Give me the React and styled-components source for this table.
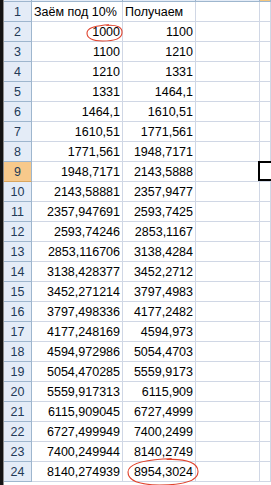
import styled, { createGlobalStyle, css } from "styled-components";

const GlobalStyle = createGlobalStyle`
  html, body {
    margin: 0;
    padding: 0;
    background: #fff;
    overflow: hidden;
  }
  body {
    font-family: "Liberation Sans", Arial, sans-serif;
  }
`;

const rows = [
  ["Заём под 10%", "Получаем"],
  ["1000", "1100"],
  ["1100", "1210"],
  ["1210", "1331"],
  ["1331", "1464,1"],
  ["1464,1", "1610,51"],
  ["1610,51", "1771,561"],
  ["1771,561", "1948,7171"],
  ["1948,7171", "2143,5888"],
  ["2143,58881", "2357,9477"],
  ["2357,947691", "2593,7425"],
  ["2593,74246", "2853,1167"],
  ["2853,116706", "3138,4284"],
  ["3138,428377", "3452,2712"],
  ["3452,271214", "3797,4983"],
  ["3797,498336", "4177,2482"],
  ["4177,248169", "4594,973"],
  ["4594,972986", "5054,4703"],
  ["5054,470285", "5559,9173"],
  ["5559,917313", "6115,909"],
  ["6115,909045", "6727,4999"],
  ["6727,499949", "7400,2499"],
  ["7400,249944", "8140,2749"],
  ["8140,274939", "8954,3024"],
];

const ACTIVE_ROW = 9;
// последняя колонка уходит за край окна
const COLS = "28px 91px 73px 64px 1fr";

const Window = styled.div`
  display: flex;
  width: 271px;
  height: 485px;
  overflow: hidden;
`;

const Frame = styled.div`
  width: 3px;
  flex: none;
  background: #141414;
  border-right: 1px solid #8c8c8c;
`;

const Sheet = styled.div`
  flex: 1;
  min-width: 0;
  display: flex;
  flex-direction: column;
  overflow: hidden;
`;

const ColHeader = styled.div`
  display: grid;
  grid-template-columns: ${COLS};
  height: 1px;
  border-bottom: 1px solid #9eb6ce;
  flex: none;
`;

const ColCell = styled.div`
  background: ${(p) => (p.$active ? "#f5c77e" : "#e4ecf7")};
  border-right: 1px solid #9eb6ce;
`;

const Row = styled.div`
  display: grid;
  grid-template-columns: ${COLS};
  height: 20px;
  flex: none;
`;

const RowNum = styled.div`
  display: flex;
  align-items: flex-end;
  justify-content: center;
  padding-bottom: 2px;
  box-sizing: border-box;
  font-size: 12.5px;
  color: #233a57;
  background: ${(p) => (p.$active ? "#f7c98b" : "#e4ecf7")};
  border-right: 1px solid #9eb6ce;
  border-bottom: 1px solid ${(p) => (p.$active ? "#d9a65f" : "#9eb6ce")};
`;

const Cell = styled.div`
  position: relative;
  display: flex;
  align-items: flex-end;
  justify-content: ${(p) => (p.$text ? "flex-start" : "flex-end")};
  padding: 0 2px 2px 2px;
  box-sizing: border-box;
  font-size: 12.5px;
  color: #000;
  white-space: nowrap;
  border-right: 1px solid #d0d7e5;
  border-bottom: 1px solid #d0d7e5;
  ${(p) =>
    p.$active &&
    css`
      border-right: none;
      margin: -1px 0 0 -2px;
      box-shadow: inset 2px 0 #000, inset 0 2px #000, inset 0 -2px #000;
      z-index: 1;
    `}
`;

const Mark = styled.svg`
  position: absolute;
  pointer-events: none;
  overflow: visible;
  z-index: 2;
`;

const Circle = ({ style, w, h }) => (
  <Mark style={style} width={w} height={h} viewBox={`0 0 ${w} ${h}`}>
    <path
      d={`M ${w * 0.55} 1.5
          C ${w * 0.85} 0.5, ${w - 0.5} ${h * 0.2}, ${w - 1} ${h * 0.5}
          C ${w - 1.5} ${h * 0.85}, ${w * 0.75} ${h - 1}, ${w * 0.45} ${h - 1}
          C ${w * 0.15} ${h - 1.2}, 1 ${h * 0.8}, 1 ${h * 0.5}
          C 1.2 ${h * 0.22}, ${w * 0.2} 2.5, ${w * 0.5} 1
          L ${w * 0.62} 0.8`}
      fill="none"
      stroke="#e0442e"
      strokeWidth="1.1"
    />
  </Mark>
);

const App = () => {
  return (
    <>
      <GlobalStyle />
      <Window>
        <Frame />
        <Sheet>
          <ColHeader>
            <ColCell />
            <ColCell />
            <ColCell />
            <ColCell />
            <ColCell $active />
          </ColHeader>
          {rows.map(([a, b], i) => {
            const n = i + 1;
            return (
              <Row key={n}>
                <RowNum $active={n === ACTIVE_ROW}>{n}</RowNum>
                <Cell $text={n === 1}>
                  {a}
                  {n === 2 && (
                    <Circle w={37} h={18} style={{ right: -1, top: 2 }} />
                  )}
                </Cell>
                <Cell $text={n === 1}>
                  {b}
                  {n === 24 && (
                    <Circle w={72} h={28} style={{ left: 4, top: -4 }} />
                  )}
                </Cell>
                <Cell />
                <Cell $active={n === ACTIVE_ROW} />
              </Row>
            );
          })}
        </Sheet>
      </Window>
    </>
  );
};

export default App;
